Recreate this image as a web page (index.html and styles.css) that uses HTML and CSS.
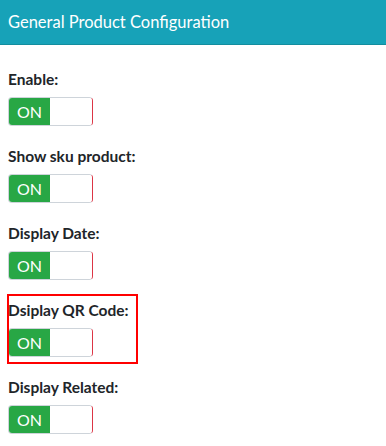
FILE: index.html
```html
<!DOCTYPE html>
<html>
<head>
  <meta charset="utf-8">
  <title>General Product Configuration</title>
  <link rel="stylesheet" href="styles.css">
</head>
<body>
  <div class="panel">
    <div class="panel-heading">General Product Configuration</div>
    <div class="panel-body">
      <div class="form-group">
        <label>Enable:</label>
        <div class="toggle"><span class="toggle-on">ON</span><span class="toggle-off"></span></div>
      </div>
      <div class="form-group">
        <label>Show sku product:</label>
        <div class="toggle"><span class="toggle-on">ON</span><span class="toggle-off"></span></div>
      </div>
      <div class="form-group">
        <label>Display Date:</label>
        <div class="toggle"><span class="toggle-on">ON</span><span class="toggle-off"></span></div>
      </div>
      <div class="form-group highlight">
        <label>Dsiplay QR Code:</label>
        <div class="toggle"><span class="toggle-on">ON</span><span class="toggle-off"></span></div>
      </div>
      <div class="form-group">
        <label>Display Related:</label>
        <div class="toggle"><span class="toggle-on">ON</span><span class="toggle-off"></span></div>
      </div>
    </div>
  </div>
</body>
</html>
```

FILE: styles.css
```css
body {
  margin: 0;
  font-family: Lato, "Open Sans", sans-serif;
  background-color: white;
  color: #212529;
}
.panel-heading {
  height: 44px;
  display: flex;
  align-items: center;
  padding: 0 8px;
  background-color: #17a2b8;
  border-bottom: 1px solid #138d9e;
  color: white;
  font-size: 16.5px;
}
.panel-body {
  padding: 23px 8px 0;
}
.form-group {
  margin-bottom: 19px;
}
.form-group label {
  display: block;
  font-size: 15.5px;
  font-weight: bold;
  line-height: 22px;
  margin-bottom: 7px;
}
.toggle {
  display: flex;
  width: 83px;
  height: 27px;
  border: 1px solid #ced4da;
  border-right-color: #dc3545;
  border-radius: 4px;
  overflow: hidden;
}
.toggle-on {
  width: 41px;
  display: flex;
  align-items: center;
  justify-content: center;
  background-color: #28a745;
  color: white;
  font-size: 16px;
}
.toggle-off {
  flex: 1;
  background-color: white;
}
.highlight {
  position: relative;
}
.highlight::after {
  content: "";
  position: absolute;
  left: -1px;
  top: -5px;
  width: 127px;
  height: 66px;
  border: 2px solid red;
}
```
